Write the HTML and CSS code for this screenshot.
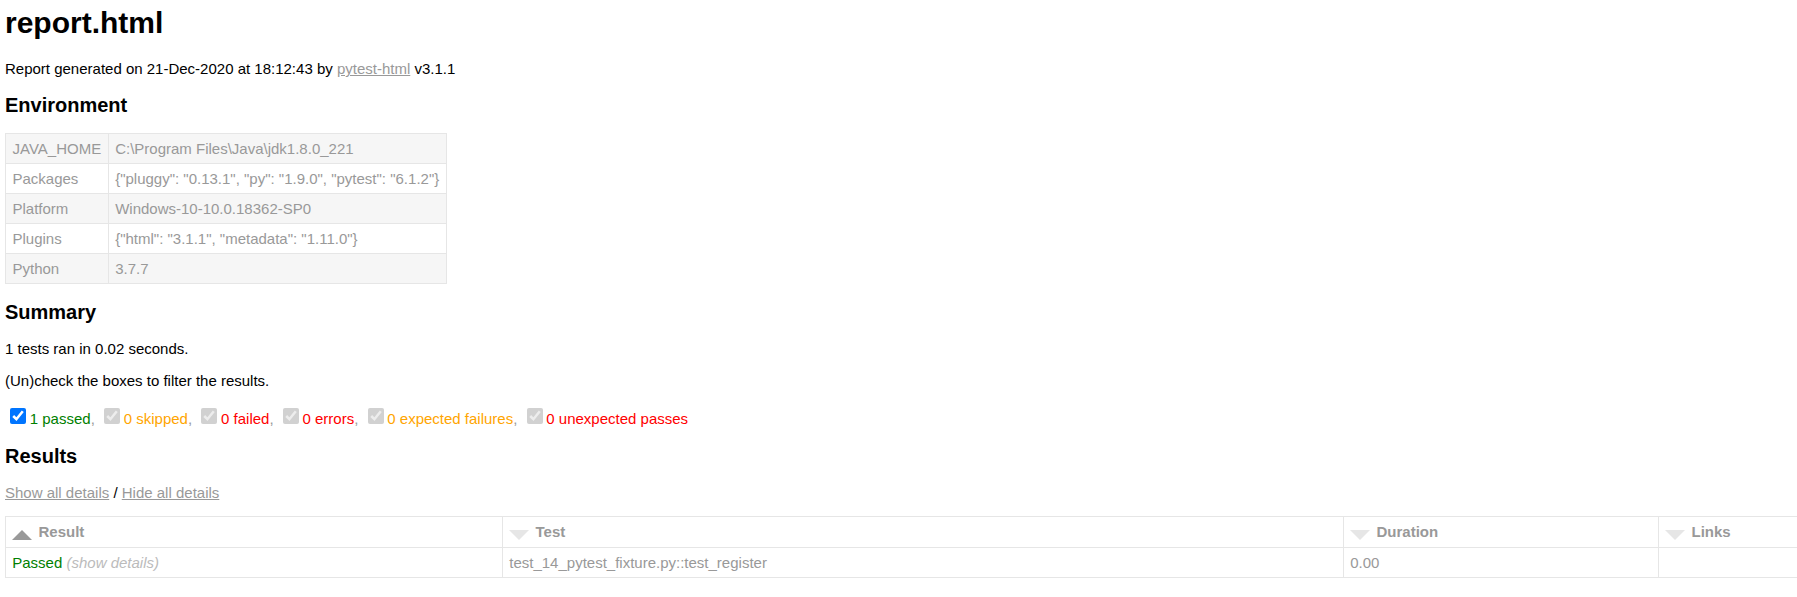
FILE: index.html
```html
<!DOCTYPE html>
<html>
<head>
<meta charset="utf-8">
<title>report.html</title>
<link rel="stylesheet" href="styles.css">
</head>
<body>
<h1>report.html</h1>
<p>Report generated on 21-Dec-2020 at 18:12:43 by <a href="#">pytest-html</a> v3.1.1</p>
<h2>Environment</h2>
<table class="env">
<tr><td>JAVA_HOME</td><td>C:\Program Files\Java\jdk1.8.0_221</td></tr>
<tr><td>Packages</td><td>{"pluggy": "0.13.1", "py": "1.9.0", "pytest": "6.1.2"}</td></tr>
<tr><td>Platform</td><td>Windows-10-10.0.18362-SP0</td></tr>
<tr><td>Plugins</td><td>{"html": "3.1.1", "metadata": "1.11.0"}</td></tr>
<tr><td>Python</td><td>3.7.7</td></tr>
</table>
<h2>Summary</h2>
<p>1 tests ran in 0.02 seconds. </p>
<p>(Un)check the boxes to filter the results.</p>
<div class="filters"><input type="checkbox" class="filter" checked><span class="passed">1 passed</span>, <input type="checkbox" class="filter" checked disabled><span class="skipped">0 skipped</span>, <input type="checkbox" class="filter" checked disabled><span class="failed">0 failed</span>, <input type="checkbox" class="filter" checked disabled><span class="error">0 errors</span>, <input type="checkbox" class="filter" checked disabled><span class="xfailed">0 expected failures</span>, <input type="checkbox" class="filter" checked disabled><span class="xpassed">0 unexpected passes</span></div>
<h2 class="results-title">Results</h2>
<p><a href="#">Show all details</a> / <a href="#">Hide all details</a></p>
<div class="results-wrap">
<table class="results">
<colgroup><col class="c-result"><col class="c-test"><col class="c-duration"><col class="c-links"></colgroup>
<thead>
<tr>
<th><div class="sort-icon asc"></div>Result</th>
<th><div class="sort-icon inactive"></div>Test</th>
<th><div class="sort-icon inactive"></div>Duration</th>
<th><div class="sort-icon inactive"></div>Links</th>
</tr>
</thead>
<tbody>
<tr>
<td class="col-result">Passed<span class="expander"> (show details)</span></td>
<td>test_14_pytest_fixture.py::test_register</td>
<td>0.00</td>
<td></td>
</tr>
</tbody>
</table>
</div>
</body>
</html>
```
FILE: styles.css
```css
html {
  overflow: hidden;
}
body {
  font-family: "Liberation Sans", Arial, Helvetica, sans-serif;
  font-size: 15px;
  color: #999;
  margin: 0 0 10px 5px;
  background: #fff;
}
h1 {
  font-size: 30px;
  color: #000;
  margin: 6px 0 20px;
}
h2 {
  font-size: 20px;
  color: #000;
  margin: 16.6px 0;
}
.results-title {
  margin-top: 17.6px;
  margin-bottom: 15.6px;
}
p {
  color: #000;
  margin: 15px 0;
}
a {
  color: #999;
}
table {
  border-collapse: collapse;
}
.env td {
  padding: 6px 6.5px;
  border: 1px solid #e6e6e6;
}
.env tr:nth-child(odd) {
  background-color: #f6f6f6;
}
.filters input {
  width: 16px;
  height: 16px;
  margin: 3.75px 3.75px 3.75px 5px;
  vertical-align: baseline;
}
.passed, .col-result {
  color: green;
}
.skipped, .xfailed {
  color: orange;
}
.failed, .error, .xpassed {
  color: red;
}
.results-wrap {
  overflow: hidden;
}
.results {
  table-layout: fixed;
  width: 1903px;
  border: 1px solid #e6e6e6;
  color: #999;
}
.c-result { width: 497px; }
.c-test { width: 841px; }
.c-duration { width: 315px; }
.c-links { width: 250px; }
.results th, .results td {
  padding: 6.25px;
  border: 1px solid #e6e6e6;
  text-align: left;
}
.results th {
  font-weight: bold;
}
.sort-icon {
  float: left;
  width: 0;
  height: 0;
  margin-right: 6.25px;
  margin-top: 6.25px;
  border-left: 10px solid transparent;
  border-right: 10px solid transparent;
}
.sort-icon.inactive {
  border-top: 10px solid #e6e6e6;
}
.sort-icon.asc {
  border-bottom: 10px solid #999;
}
.expander {
  color: #bbb;
  font-style: italic;
}
```
